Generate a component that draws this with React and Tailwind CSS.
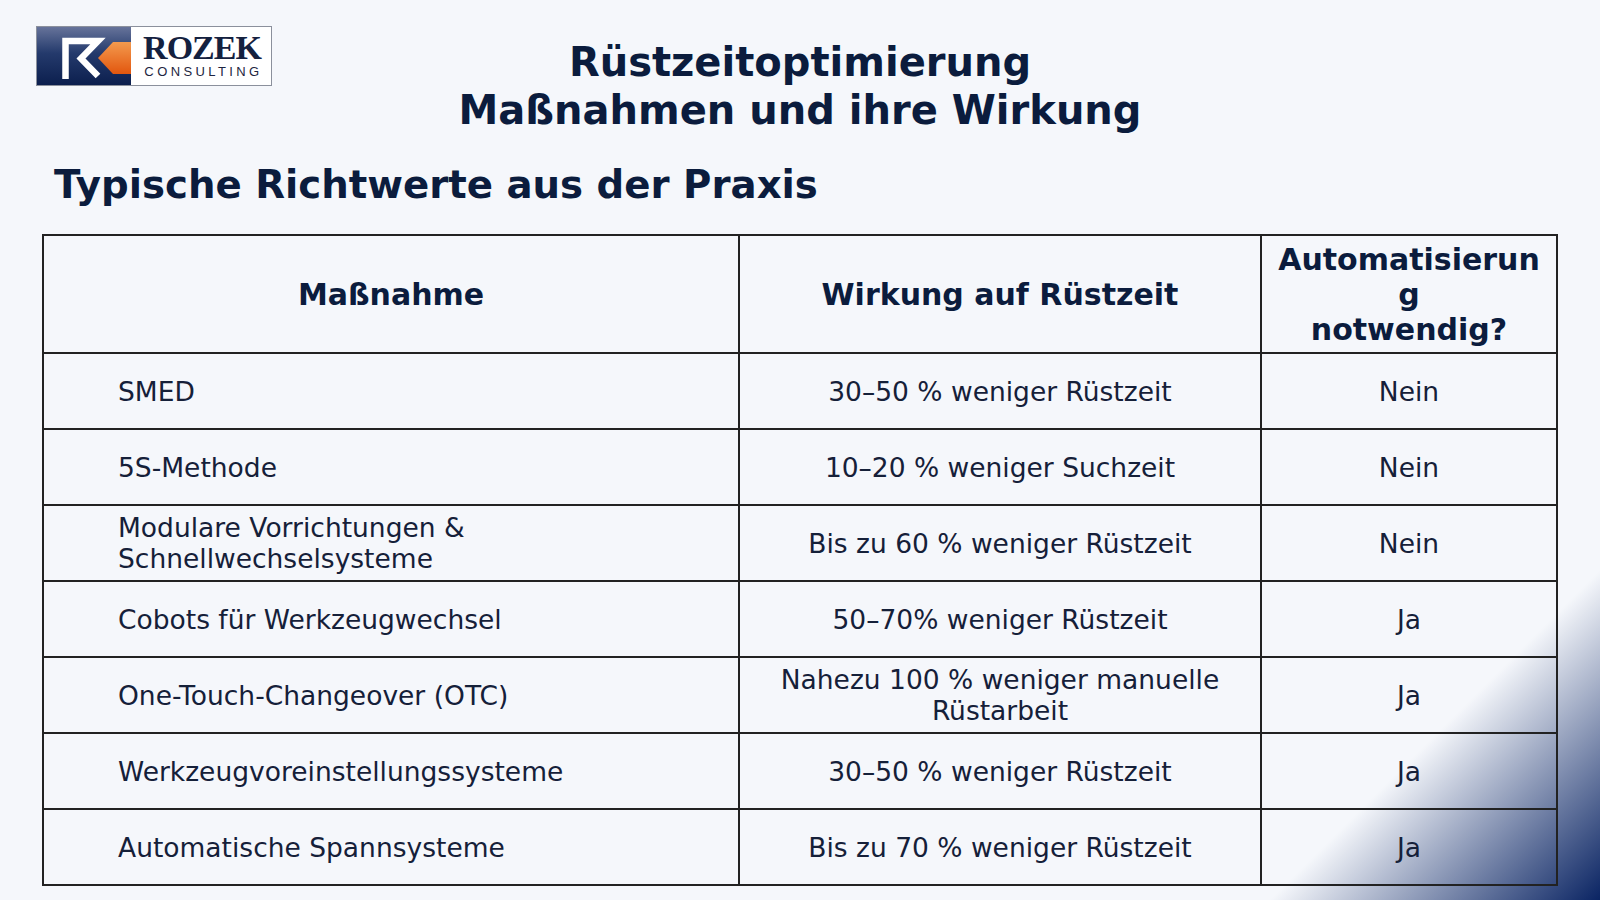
import React from 'react';

const rows = [
  { measure: 'SMED', effect: '30–50 % weniger Rüstzeit', auto: 'Nein' },
  { measure: '5S-Methode', effect: '10–20 % weniger Suchzeit', auto: 'Nein' },
  { measure: 'Modulare Vorrichtungen & Schnellwechselsysteme', effect: 'Bis zu 60 % weniger Rüstzeit', auto: 'Nein' },
  { measure: 'Cobots für Werkzeugwechsel', effect: '50–70% weniger Rüstzeit', auto: 'Ja' },
  { measure: 'One-Touch-Changeover (OTC)', effect: 'Nahezu 100 % weniger manuelle Rüstarbeit', auto: 'Ja' },
  { measure: 'Werkzeugvoreinstellungssysteme', effect: '30–50 % weniger Rüstzeit', auto: 'Ja' },
  { measure: 'Automatische Spannsysteme', effect: 'Bis zu 70 % weniger Rüstzeit', auto: 'Ja' },
];

const Logo = () => (
  <div className="flex h-[60px] w-[236px] border border-[#8b909c] bg-white">
    <svg width="94" height="58" viewBox="0 0 94 58" className="shrink-0">
      <defs>
        <linearGradient id="rcBg" x1="0" y1="0" x2="0" y2="1">
          <stop offset="0" stopColor="#66739a" />
          <stop offset="0.45" stopColor="#243a6c" />
          <stop offset="1" stopColor="#0c1f4e" />
        </linearGradient>
        <linearGradient id="rcOrange" x1="0" y1="0" x2="0" y2="1">
          <stop offset="0" stopColor="#f39a4e" />
          <stop offset="1" stopColor="#e2560e" />
        </linearGradient>
      </defs>
      <rect width="94" height="58" fill="url(#rcBg)" />
      <polyline
        points="28.5,52 28.5,14 61,14 44,31.5 61,49"
        fill="none"
        stroke="#ffffff"
        strokeWidth="6.5"
        strokeLinejoin="miter"
      />
      <polygon points="76,15 94,15 94,47 76,47 61,31" fill="url(#rcOrange)" />
    </svg>
    <div className="flex flex-1 flex-col items-center justify-center pl-[2px]">
      <span className="font-['Liberation_Serif',serif] text-[34px] font-bold leading-[27px] tracking-[-1px] text-[#14213f]">
        ROZEK
      </span>
      <span className="mt-[4px] pl-[3px] font-['Liberation_Sans',sans-serif] text-[13px] leading-[13px] tracking-[3.4px] text-[#1d2540]">
        CONSULTING
      </span>
    </div>
  </div>
);

export default function App() {
  return (
    <div className="relative h-[900px] w-full overflow-hidden bg-[#f5f7fb] font-['DejaVu_Sans',sans-serif] text-[#152039]">
      <div className="absolute bottom-0 right-0 h-[330px] w-[330px] bg-[linear-gradient(to_bottom_right,transparent_50%,#0a2463_100%)]" />

      <div className="relative">
        <div className="grid grid-cols-[1fr_auto_1fr]">
          <div className="pl-[36px] pt-[26px]">
            <Logo />
          </div>
          <h1 className="pt-[38px] text-center text-[40px] font-bold leading-[48px] text-[#0b1c3d]">
            Rüstzeitoptimierung
            <br />
            Maßnahmen und ihre Wirkung
          </h1>
          <div />
        </div>

        <h2 className="mt-[28px] pl-[54px] text-[38.7px] font-bold leading-[46px] text-[#0b1c3d]">
          Typische Richtwerte aus der Praxis
        </h2>

        <table className="ml-[42px] mt-[26px] w-[1514px] table-fixed border-collapse border-2 border-[#222]">
          <colgroup>
            <col className="w-[696px]" />
            <col className="w-[522px]" />
            <col className="w-[296px]" />
          </colgroup>
          <thead>
            <tr className="h-[118px] text-[30px] font-bold leading-[35px] text-[#0b1c3d]">
              <th className="border-2 border-[#222] px-[8px]">Maßnahme</th>
              <th className="border-2 border-[#222] px-[8px]">Wirkung auf Rüstzeit</th>
              <th className="break-words border-2 border-[#222] px-[8px]">
                Automatisierung
                <br />
                notwendig?
              </th>
            </tr>
          </thead>
          <tbody className="text-[26.5px] leading-[31px]">
            {rows.map((row) => (
              <tr key={row.measure} className="h-[76px]">
                <td className="border-2 border-[#222] pl-[74px] pr-[8px]">{row.measure}</td>
                <td className="border-2 border-[#222] px-[8px] text-center">{row.effect}</td>
                <td className="border-2 border-[#222] px-[8px] text-center">{row.auto}</td>
              </tr>
            ))}
          </tbody>
        </table>
      </div>
    </div>
  );
}
